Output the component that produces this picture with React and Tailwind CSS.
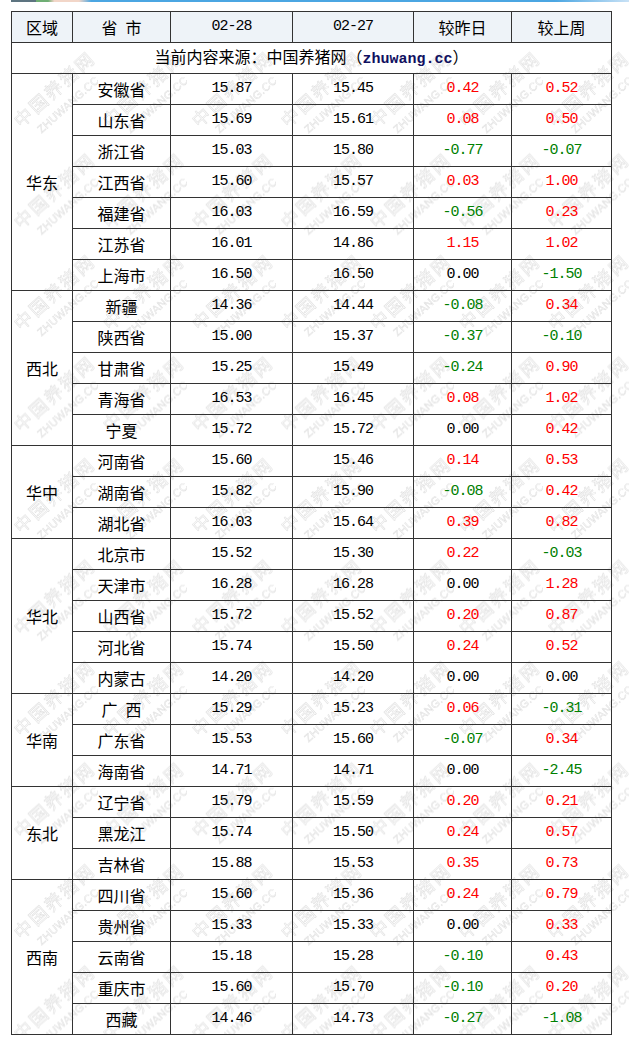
import React from "react";

const data = [
  ["华东", [
    ["安徽省", "15.87", "15.45", "0.42", "0.52"],
    ["山东省", "15.69", "15.61", "0.08", "0.50"],
    ["浙江省", "15.03", "15.80", "-0.77", "-0.07"],
    ["江西省", "15.60", "15.57", "0.03", "1.00"],
    ["福建省", "16.03", "16.59", "-0.56", "0.23"],
    ["江苏省", "16.01", "14.86", "1.15", "1.02"],
    ["上海市", "16.50", "16.50", "0.00", "-1.50"],
  ]],
  ["西北", [
    ["新疆", "14.36", "14.44", "-0.08", "0.34"],
    ["陕西省", "15.00", "15.37", "-0.37", "-0.10"],
    ["甘肃省", "15.25", "15.49", "-0.24", "0.90"],
    ["青海省", "16.53", "16.45", "0.08", "1.02"],
    ["宁夏", "15.72", "15.72", "0.00", "0.42"],
  ]],
  ["华中", [
    ["河南省", "15.60", "15.46", "0.14", "0.53"],
    ["湖南省", "15.82", "15.90", "-0.08", "0.42"],
    ["湖北省", "16.03", "15.64", "0.39", "0.82"],
  ]],
  ["华北", [
    ["北京市", "15.52", "15.30", "0.22", "-0.03"],
    ["天津市", "16.28", "16.28", "0.00", "1.28"],
    ["山西省", "15.72", "15.52", "0.20", "0.87"],
    ["河北省", "15.74", "15.50", "0.24", "0.52"],
    ["内蒙古", "14.20", "14.20", "0.00", "0.00"],
  ]],
  ["华南", [
    ["广\u2002西", "15.29", "15.23", "0.06", "-0.31"],
    ["广东省", "15.53", "15.60", "-0.07", "0.34"],
    ["海南省", "14.71", "14.71", "0.00", "-2.45"],
  ]],
  ["东北", [
    ["辽宁省", "15.79", "15.59", "0.20", "0.21"],
    ["黑龙江", "15.74", "15.50", "0.24", "0.57"],
    ["吉林省", "15.88", "15.53", "0.35", "0.73"],
  ]],
  ["西南", [
    ["四川省", "15.60", "15.36", "0.24", "0.79"],
    ["贵州省", "15.33", "15.33", "0.00", "0.33"],
    ["云南省", "15.18", "15.28", "-0.10", "0.43"],
    ["重庆市", "15.60", "15.70", "-0.10", "0.20"],
    ["西藏", "14.46", "14.73", "-0.27", "-1.08"],
  ]],
];

const cjk = "font-['Noto_Sans_CJK_SC',sans-serif] text-[16px] leading-[20px]";
const num = "font-['Liberation_Mono',monospace] text-[15px] leading-[20px] tracking-[-1px]";
const cell = "border border-[#333] p-0 text-center align-middle";

function colorOf(v) {
  if (v.startsWith("-")) return "text-[#008000]";
  if (v === "0.00") return "text-black";
  return "text-[#ff0000]";
}

function Watermark() {
  return (
    <svg className="absolute top-0 left-0 pointer-events-none" width="629" height="1044">
      <defs>
        <pattern id="wm" patternUnits="userSpaceOnUse" x="9" y="44.3" width="89" height="101.5">
          <g transform="translate(12 84) rotate(-42)">
            <text x="0" y="0" fontSize="18" letterSpacing="2.4" fontFamily="Noto Sans CJK SC, sans-serif" fill="#fcfcfc" stroke="#dadada" strokeWidth="0.45">中国养猪网</text>
            <text x="11.7" y="17.8" fontSize="11" letterSpacing="0.3" fontFamily="Liberation Sans, sans-serif" fill="#fcfcfc" stroke="#dadada" strokeWidth="0.4">ZHUWANG.CC</text>
          </g>
        </pattern>
      </defs>
      <rect x="11" y="42" width="618" height="992" fill="url(#wm)" />
    </svg>
  );
}

export default function App() {
  return (
    <div className="relative w-[629px] h-[1044px] bg-white overflow-hidden">
      <Watermark />
      <div className="relative ml-[11px] h-[2px] w-[618px] bg-[linear-gradient(to_right,#5d7480_0%,#5d7480_4%,#6fae74_4%,#6fae74_6%,#f2d6c8_7%,#f2d6c8_11%,#4ba6e2_13%,#4ba6e2_88%,#c9e2f6_100%)]" />
      <table className="relative mt-[9px] ml-[11px] w-[600px] table-fixed border-collapse">
        <colgroup>
          <col className="w-[61px]" />
          <col className="w-[98px]" />
          <col className="w-[122px]" />
          <col className="w-[121px]" />
          <col className="w-[98px]" />
          <col className="w-[100px]" />
        </colgroup>
        <thead>
          <tr className="h-[31px] bg-[#eef3f8]">
            <th className={`${cell} ${cjk} font-normal text-black`}>区域</th>
            <th className={`${cell} ${cjk} font-normal text-black whitespace-pre`}>省{"\u2002"}市</th>
            <th className={`${cell} ${num} font-normal text-black`}>02-28</th>
            <th className={`${cell} ${num} font-normal text-black`}>02-27</th>
            <th className={`${cell} ${cjk} font-normal text-black`}>较昨日</th>
            <th className={`${cell} ${cjk} font-normal text-black`}>较上周</th>
          </tr>
        </thead>
        <tbody>
          <tr className="h-[31px]">
            <td colSpan={6} className={`${cell} ${cjk} text-black`}>
              当前内容来源：中国养猪网（<span className="font-['Liberation_Mono',monospace] font-bold text-[15px] text-[#101060]">zhuwang.cc</span>）
            </td>
          </tr>
          {data.map(([region, rows]) =>
            rows.map((r, i) => (
              <tr key={region + i} className="h-[31px]">
                {i === 0 && (
                  <td rowSpan={rows.length} className={`${cell} ${cjk} text-black`}>{region}</td>
                )}
                <td className={`${cell} ${cjk} text-black whitespace-pre`}>{r[0]}</td>
                <td className={`${cell} ${num} text-black`}>{r[1]}</td>
                <td className={`${cell} ${num} text-black`}>{r[2]}</td>
                <td className={`${cell} ${num} ${colorOf(r[3])}`}>{r[3]}</td>
                <td className={`${cell} ${num} ${colorOf(r[4])}`}>{r[4]}</td>
              </tr>
            ))
          )}
        </tbody>
      </table>
    </div>
  );
}
